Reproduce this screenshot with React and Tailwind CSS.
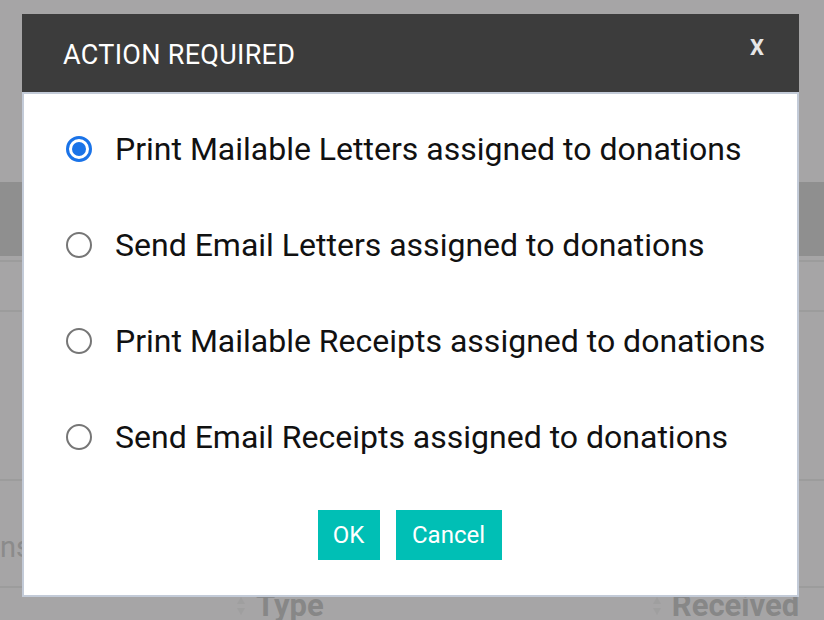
import { useState } from "react";

const options = [
  "Print Mailable Letters assigned to donations",
  "Send Email Letters assigned to donations",
  "Print Mailable Receipts assigned to donations",
  "Send Email Receipts assigned to donations",
];

function SortIcon() {
  return (
    <svg width="10" height="20" viewBox="0 0 10 20" className="opacity-50">
      <path d="M5 1 L9 8 H1 Z" fill="#9a9a9a" />
      <path d="M5 19 L9 12 H1 Z" fill="#9a9a9a" />
    </svg>
  );
}

export default function App() {
  const [selected, setSelected] = useState(0);

  return (
    <div
      className="relative w-[824px] h-[620px] overflow-hidden bg-[#a6a5a6]"
      style={{ fontFamily: "Roboto, 'Liberation Sans', sans-serif" }}
    >
      {/* faded page behind the overlay */}
      <div className="flex flex-col">
        <div className="h-[182px]" />
        <div className="h-[74px] bg-[#8f8f8f]" />
        <div className="h-[6px] border-b-2 border-[#9c9c9c]" />
        <div className="h-[50px] border-b-2 border-[#9c9c9c]" />
        <div className="h-[169px] border-b-2 border-[#9c9c9c]" />
        <div className="h-[107px] flex items-center border-b-2 border-[#9c9c9c]">
          <span className="text-[29px] text-[#8b8b8b] leading-none mt-[28px]">ns</span>
        </div>
        <div className="h-[28px] flex items-start pt-[2px]">
          <div className="ml-[236px] flex items-center gap-[10px]">
            <SortIcon />
            <span className="text-[31px] leading-none font-bold text-[#878787]">Type</span>
          </div>
          <div className="ml-[328px] flex items-center gap-[10px]">
            <SortIcon />
            <span className="text-[31px] leading-none font-bold text-[#878787]">Received</span>
          </div>
        </div>
      </div>

      {/* Modal */}
      <div className="absolute left-[22px] top-[14px] w-[777px] flex flex-col">
        <div className="h-[78px] bg-[#3c3c3c] flex items-center justify-between pl-[41px] pr-[35px]">
          <span className="text-white text-[27px] tracking-[0.3px] mt-[4px]">ACTION REQUIRED</span>
          <span className="text-[#e6e6e6] text-[22px] font-bold -mt-[12px]">X</span>
        </div>
        <div className="h-[505px] bg-white border-2 border-[#c3cbd8] flex flex-col pt-[7px]">
          {options.map((label, i) => (
            <label
              key={label}
              className="h-[96px] flex items-center gap-[23px] pl-[42px] cursor-pointer"
              onClick={() => setSelected(i)}
            >
              {selected === i ? (
                <span className="w-[26px] h-[26px] rounded-full border-[3px] border-[#1a73e8] flex items-center justify-center">
                  <span className="w-[14px] h-[14px] rounded-full bg-[#1a73e8]" />
                </span>
              ) : (
                <span className="w-[26px] h-[26px] rounded-full border-2 border-[#767676]" />
              )}
              <span className="text-[32px] text-[#111]">{label}</span>
            </label>
          ))}
          <div className="flex justify-center gap-[16px] mt-[25px] pr-[2px]">
            <button className="h-[50px] w-[62px] bg-[#00bfb5] text-white text-[24px]">OK</button>
            <button className="h-[50px] w-[106px] bg-[#00bfb5] text-white text-[24px]">Cancel</button>
          </div>
        </div>
      </div>
    </div>
  );
}
